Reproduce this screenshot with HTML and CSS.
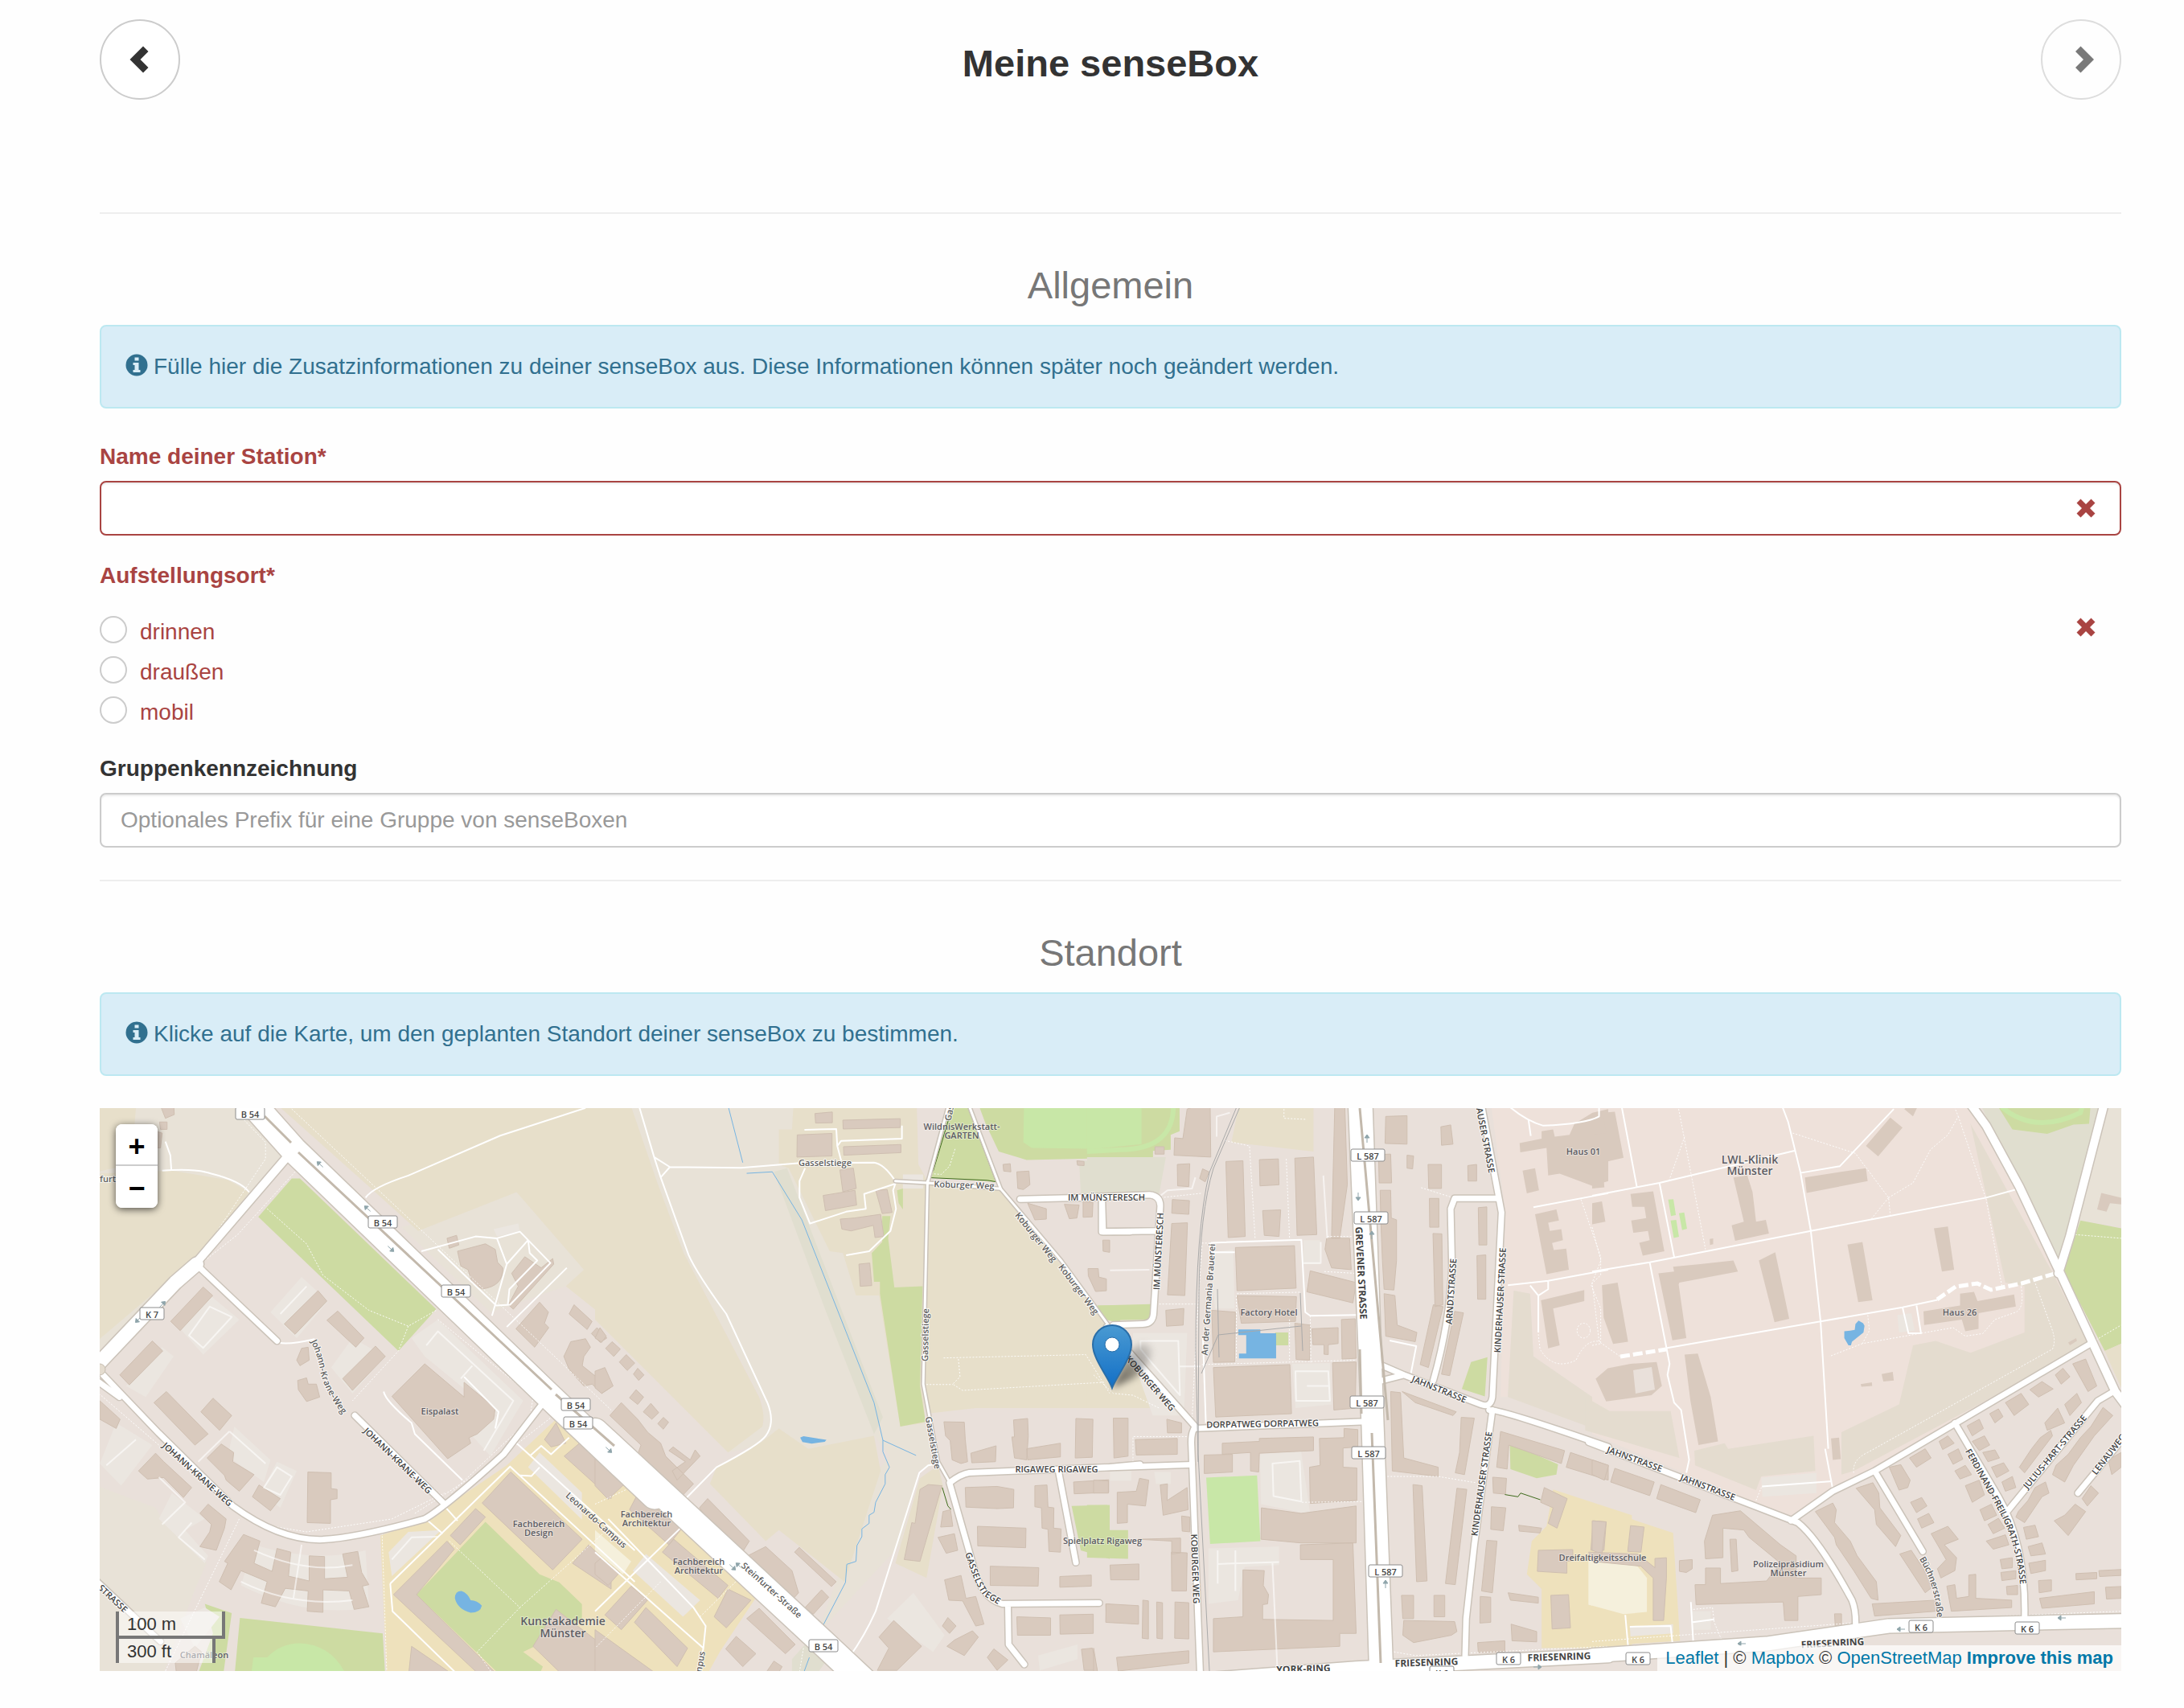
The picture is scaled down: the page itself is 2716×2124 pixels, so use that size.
FILE: index.html
```html
<!DOCTYPE html>
<html lang="de">
<head>
<meta charset="utf-8">
<meta name="viewport" content="width=device-width, initial-scale=1">
<title>Meine senseBox</title>
<link rel="stylesheet" href="styles.css">
</head>
<body>
<main class="page">
  <header class="wizard-head">
    <button class="round-btn" type="button" aria-label="Zurück">
      <svg width="26" height="34" viewBox="0 0 26 34" aria-hidden="true"><path d="M17 0.500 23.500 7 13.500 17 23.500 27 17 33.500 0.500 17z"/></svg>
    </button>
    <h1 class="wizard-title">Meine senseBox</h1>
    <button class="round-btn" type="button" aria-label="Weiter" disabled>
      <svg width="34" height="34" viewBox="-10 0 34 34" aria-hidden="true"><path d="M6.500 0.500 0 7 10 17 0 27 6.500 33.500 23 17z"/></svg>
    </button>
  </header>

  <form class="station-form">
    <section class="block">
      <h2 class="block-title">Allgemein</h2>
      <p class="alert">
        <svg class="info" width="28" height="28" viewBox="0 0 28 28" aria-hidden="true"><circle cx="14" cy="14" r="13.500"/><path class="info-i" d="M11.500 4.500h5v4h-5zM9.500 11h7v9h2v3h-9v-3h2v-6h-2z"/></svg>
        <span>Fülle hier die Zusatzinformationen zu deiner senseBox aus. Diese Informationen können später noch geändert werden.</span>
      </p>
      <div class="field has-error">
        <label class="field-label" for="name">Name deiner Station*</label>
        <div class="control">
          <input class="text-input" id="name" type="text">
          <svg class="feedback" width="24" height="24" viewBox="0 0 24 24" aria-hidden="true"><path d="M5.500 0.500 12 7 18.500 0.500 23.500 5.500 17 12 23.500 18.500 18.500 23.500 12 17 5.500 23.500 0.500 18.500 7 12 0.500 5.500z"/></svg>
        </div>
      </div>
      <fieldset class="field has-error">
        <legend class="field-label">Aufstellungsort*</legend>
        <div class="control radios">
          <label class="radio"><input type="radio" name="exposure" value="indoor"><span>drinnen</span></label>
          <label class="radio"><input type="radio" name="exposure" value="outdoor"><span>draußen</span></label>
          <label class="radio"><input type="radio" name="exposure" value="mobile"><span>mobil</span></label>
          <svg class="feedback" width="24" height="24" viewBox="0 0 24 24" aria-hidden="true"><path d="M5.500 0.500 12 7 18.500 0.500 23.500 5.500 17 12 23.500 18.500 18.500 23.500 12 17 5.500 23.500 0.500 18.500 7 12 0.500 5.500z"/></svg>
        </div>
      </fieldset>
      <div class="field">
        <label class="field-label" for="group">Gruppenkennzeichnung</label>
        <div class="control">
          <input class="text-input" id="group" type="text" placeholder="Optionales Prefix für eine Gruppe von senseBoxen">
        </div>
      </div>
    </section>

    <section class="block">
      <h2 class="block-title">Standort</h2>
      <p class="alert">
        <svg class="info" width="28" height="28" viewBox="0 0 28 28" aria-hidden="true"><circle cx="14" cy="14" r="13.500"/><path class="info-i" d="M11.500 4.500h5v4h-5zM9.500 11h7v9h2v3h-9v-3h2v-6h-2z"/></svg>
        <span>Klicke auf die Karte, um den geplanten Standort deiner senseBox zu bestimmen.</span>
      </p>

      <div class="map">
        <svg class="tiles" viewBox="0 0 2514 700" preserveAspectRatio="xMidYMid slice" role="img" aria-label="Karte von Münster">
          <defs>
            <g id="roads">
              <g transform="matrix(.40816 0 0 .45918 -4 -8)">
                <path class="w-xl" d="M440 -30 600 130 1370 790 1700 1068"/>
                <path class="w-l" d="M590 140 310 430"/>
                <path class="w-h" d="M305 440 240 490 0 715"/>
                <path class="w-m" d="M20 740 90 805 190 898 415 1095Q560 1190 690 1186 800 1180 1000 1130 1060 1100 1240 955L1370 805M0 755 70 800"/>
                <path class="w-m" d="M787 850 1055 1085M315 450 550 648M-10 1290 195 1462"/>
              </g>
              <g transform="matrix(.40816 0 0 .45918 616 -8)">
                <path class="w-xl" d="M0 893 270 1115 700 1470 820 1570"/>
                <path class="w-m" d="M1660 982 1568 990 1140 1005Q1115 1008 1080 1032L1150 1250Q1175 1345 1240 1360L1536 1358M1258 1362 1260 1470 1308 1524M1412 1000 1465 1248M1295 264 1568 258M1545 262 1548 352 1630 352"/>
                <path class="w-s" d="M1236 236 1420 430 1568 610"/>
                <path class="w-s" d="M1013 215 1000 765 1045 975 1080 1030M1013 220 1080 0M1236 236 1135 0M915 215 1013 220 1236 236"/>
              </g>
              <g transform="matrix(.40816 0 0 .45918 1236 -8)">
                <path class="w-h" d="M797 0 838 880 862 1560M828 0 862 860 892 1560"/>
                <path class="w-h" d="M200 1575 800 1535 1568 1500"/>
                <path class="w-m" d="M0 992 300 983M310 885 860 865M0 258 170 252Q205 255 203 285L183 570Q182 602 150 602L60 605 M25 262 25 352 190 350"/>
                <path class="w-m" d="M40 610 310 880Q296 895 298 930L325 1560"/>
                <path class="w-m" d="M1180 0 1243 300 1215 800Q1210 830 1180 820L945 740 880 715M945 740 880 755M1235 262 1100 262 1088 290 1092 450Q1085 600 1035 755M1215 835 1160 1200 1135 1400 1132 1500M1205 835Q1230 830 1568 935"/>
              </g>
              <g transform="matrix(.43367 0 0 .45918 1856 -8)">
                <path class="w-h" d="M0 1500 500 1468 850 1420 1568 1405"/>
                <path class="w-m" d="M-10 922 590 1140Q650 1185 745 1350 758 1380 755 1430M570 1135 690 1055 810 1000 1430 655M810 1000 948 1218M1040 870 1165 1070Q1245 1200 1240 1400M1190 1110 1450 810 1495 785M1393 1060 1568 860"/>
                <path class="w-l" d="M1080 0 1130 65 1225 230 1340 460 1500 785 1560 860M1470 0 1370 365 1337 465"/>
              </g>
            </g>
            <path id="p-jk" d="M267 288Q276 305 280 330 286 352 306 378"/>
            <path id="p-ga" d="M1081 552Q1092 588 1102 602L1126 617"/>
            <path id="p-ff" d="M2324 424Q2350 470 2368 502 2390 545 2394 602"/>
            <path id="p-bu" d="M2267 558Q2287 590 2290 632"/>
            <path id="arrow" d="M-5 0H4M1 -3 5 0 1 3z"/>
            <linearGradient id="pin" x1="0" y1="0" x2="0" y2="1"><stop offset="0" stop-color="#4a9ad2"/><stop offset="1" stop-color="#126fc6"/></linearGradient>
            <linearGradient id="shade" x1="0" y1="1" x2="1" y2="0"><stop offset="0" stop-color="#000" stop-opacity=".6"/><stop offset="1" stop-color="#000" stop-opacity=".1"/></linearGradient>
            <filter id="soft" x="-50%" y="-50%" width="200%" height="200%"><feGaussianBlur stdDeviation="4"/></filter>
          </defs>

          <rect class="residential" width="2514" height="700"/>

          <!-- land use -->
          <g transform="matrix(.40816 0 0 .45918 -4 -8)">
            <path class="meadow" d="M0 0H500L590 140 310 430 0 680z"/>
            <path class="farm" d="M0 0H122L105 170 0 190zM0 195 230 187 400 212 465 245 310 430 225 480 0 650z"/>
            <path class="meadow" d="M930 340 1280 245 1485 455 1430 500 1200 570z"/>
            <path class="farm" d="M540 0H1600V620L1430 500 1485 455 1280 245 980 350 830 230z"/>
            <path class="green" d="M595 208H620L1035 562 920 675 493 312z"/>
            <path class="meadow" d="M0 1040 180 1100 200 1130 335 1250 300 1320 200 1560H0z"/>
            <path class="green" d="M330 1360 412 1385 385 1560H305L355 1440zM437 1398 872 1440 880 1560H420z"/>
            <path class="pitch" d="M470 1560 478 1505 520 1505Q560 1468 618 1467 720 1470 765 1560z"/>
            <path class="school" d="M865 1175 1010 1130 1250 985 1400 860 1620 1000V1570H885z"/>
            <path class="green" d="M1185 1138 1350 1280 1410 1302 1502 1380 1440 1430 1300 1490 1360 1530 1340 1570H1250L975 1335z"/>
            <path class="water" d="M1092 1345Q1092 1325 1112 1325 1130 1330 1140 1350 1160 1350 1174 1365 1170 1384 1140 1384 1100 1375 1092 1345z"/>
            <path class="yard" d="M625 475 705 540 610 640 530 570zM340 520 435 590 325 685 250 610zM780 640 880 690 780 790 715 720zM200 665 235 690 150 800 90 770zM1040 590 1300 810 1200 960 1140 900 1220 850 1000 690 960 640zM60 870 170 930 75 1040 10 980zM420 880 530 970 510 1030 400 960zM550 975 610 1000 560 1100 500 1060zM230 1060 330 1130 270 1160 340 1230 330 1250 190 1130zM890 1220 950 1165 1050 1160 900 1285zM1350 950 1540 1110 1500 1150 1315 990zM480 1200Q660 1250 820 1215L830 1370Q640 1400 440 1310zM1210 345 1285 330 1290 352 1220 365zM255 1400 330 1370 375 1395 300 1480z"/>
          </g>
          <g transform="matrix(.40816 0 0 .45918 616 -8)">
            <path class="meadow" d="M105 0H605L600 75 560 75V170L590 180 715 405 755 410 795 525H865L930 880 1005 870 1050 980 985 1000 930 1200 700 1420 640 1570 660 1480 860 1000 900 960 850 905 650 940 560 885 505 930 405 950 515 870 510 810 270 410 190 220z"/>
            <path class="farm" d="M0 0H105L190 220 270 410 500 800Q520 850 510 880L405 950 0 590zM605 0H980L985 170 1013 215 1000 765 1005 870 930 880 865 525H795L755 410 715 405 590 180 560 170V75L600 75zM1013 225 1236 240 1600 640V830H1160L1010 845 1000 765zM560 885 650 940 850 905 870 1000 760 1300 560 1160 520 1190 350 1035 370 990 510 920zM990 1020 1045 985 1060 1040 1010 1290 915 1250z"/>
            <path class="scrub" d="M545 190 585 180 877 855 850 900 700 560zM1475 160H1700V250H1480zM600 1510 640 1470 700 1520 660 1570H600z"/>
            <path class="green" d="M1085 0H1137L1222 217 1022 205zM1165 0H1700V150L1315 158 1230 135 1190 60zM843 410 875 380V310H900L893 370 912 503 998 500 990 770 1007 867 930 880 868 520V488H850zM920 240 938 235V292L925 275zM1452 1095 1568 1092V1238L1480 1215zM1530 552H1600V600L1555 590z"/>
            <path class="pitch" d="M1307 0H1700V130L1330 125 1305 110z"/>
            <path class="school" d="M0 930 280 1160 500 1330 380 1490 330 1570H-40V940z"/>
            <path class="yard" d="M155 1225 320 1350 268 1395 115 1270zM970 1330 1065 1445 1030 1490 890 1400zM938 197H1000V235H938zM1350 1500 1470 1470V1510L1355 1540z"/>
            <path class="green" d="M0 1490 55 1530 30 1570H0z"/>
            <path class="water" d="M625 910 635 906 705 916 700 921 660 926 632 922z"/>
            <path class="sand" d="M0 1160 110 1245 85 1280 0 1215z"/>
          </g>
          <g transform="matrix(.40816 0 0 .45918 1236 -8)">
            <path class="farm" d="M445 0H670V135L420 110zM-20 560 60 610 200 800 190 830H-20z"/>
            <path class="scrub" d="M-20 150H220L200 248H-20z"/>
            <path class="hospital" d="M1210 0H1640V900L1568 900V830L1340 690 1330 520 1280 512 1262 800 1240 800 1255 300z"/>
            <path class="heath" d="M1280 512 1330 520 1340 690 1568 830V900L1262 800z"/>
            <path class="green" d="M-20 0H262V80L235 90V130L-20 145zM12 552 175 548 170 590 60 592zM1150 705 1200 692 1192 798 1122 778zM-20 1092H42V1160H105V1238L-20 1235zM1268 925 1415 982 1410 1010 1350 1020 1270 995zM553 625H593V660H553z"/>
            <path class="pitch" d="M-20 0H146V115L-20 130zM343 1018 498 1012 508 1190 355 1198z"/>
            <path class="pitch-line" d="M-20 135 80 130Q250 130 243 0"/>
            <path class="school" d="M1400 1050 1640 1120V1480H1365V1320L1320 1280 1335 1190 1380 1150z"/>
            <path class="sand" d="M1508 1240H1640V1390L1508 1362z"/>
            <path class="water" d="M441 617H508V627H556V695H443V682H465V632H441z"/>
            <path class="yard" d="M120 626H285L275 850H180L120 700zM350 410 425 400 430 560 370 560zM507 955 632 945 660 1118 510 1090zM350 1210 565 1205V1255L460 1260 440 1350 350 1360zM605 710 720 708 725 820 615 830zM640 375 690 375V440H640zM50 1000H115V1027H50zM185 1003H235V1035H190z"/>
          </g>
          <g transform="matrix(.43367 0 0 .45918 1856 -8)">
            <path class="hospital" d="M0 0H1085L1225 240 1340 460 1430 655 810 1000 570 1130 250 1000 0 900z"/>
            <path class="heath" d="M1085 60 1330 480 1420 655 1090 830 750 1000 715 1010V895L880 820 920 660 985 648 1085 680 1240 625V500L1185 490zM-20 800 50 838H225L250 965-20 890zM293 945 380 925 390 940 635 905 640 1000 485 1015 470 1052 295 985z"/>
            <path class="scrub" d="M1110 0H1470L1390 300 1335 430 1225 230z"/>
            <path class="meadow" d="M1475 0H1530V340L1400 322 1380 350z"/>
            <path class="green" d="M1155 0H1430L1425 60 1380 62 1305 87 1205 75zM1400 322 1530 345V650L1470 675 1352 460z"/>
            <path class="farm" d="M1470 675 1530 650V800L1500 740z"/>
            <path class="school" d="M0 1095 232 1168 252 1460 0 1475z"/>
            <path class="sand" d="M-10 1240 130 1258 157 1290V1382L90 1388-10 1362z"/>
            <path class="pitch" d="M218 265 233 264 240 307 226 310zM249 302 264 300 272 344 258 348zM225 322 241 320 249 366 234 369z"/>
            <path class="pitch-line" d="M1175 15Q1270 90 1400 30L1410 0"/>
            <path class="yard" d="M485 1018 643 1005V1060L488 1070zM875 578 915 573 925 620 880 625zM108 1422 232 1415V1440L110 1448zM285 1380H340V1430H285z"/>
            <path class="water" d="M764 593 777 600 781 607 778 625 745 650 742 660H735L723 640V622L740 620 753 618 755 602z"/>
          </g>

          <!-- buildings -->
          <g class="buildings" transform="matrix(.40816 0 0 .45918 -4 -8)">
            <path d="M190 0H235L237 35 210 45zM192 55H215V75H195zM180 80 200 85 195 125H180zM325 502 354 525 255 620 226 595zM170 648 202 675 100 767 71 740zM675 512 702 540 605 630 572 602zM735 567 815 640 790 665 702 592zM850 662 880 690 780 782 750 750zM213 785 340 900 300 930 175 815zM355 803 412 850 375 890 318 840zM625 668 645 665 648 700 620 715 610 700zM613 755 640 748 645 765 670 765 680 800 640 812 615 780zM180 952 205 975 290 1045 265 1072 205 1018 155 1022 128 1000zM380 927 418 950 415 975 480 1010 435 1055 395 1025 390 1012 337 965zM495 1038 560 1075 530 1108 475 1070zM644 1003 715 1005V1048L733 1050V1075L713 1078V1142L642 1140zM1000 710 1120 800V760L1215 830 1210 860 1160 900 1135 910 1140 925 1070 967 900 798zM1100 405 1185 385 1215 400 1222 435 1238 450Q1240 500 1175 507L1145 492 1132 455 1110 445zM1068 370 1097 362 1104 388 1075 397zM1305 420 1355 450 1390 425 1393 440 1270 562 1255 550 1285 500 1265 465zM1350 543 1377 570 1365 600 1378 612 1335 665 1278 615zM1455 550 1510 595 1495 617 1440 575zM1525 612 1555 640 1535 652 1508 628zM1445 650 1490 642 1505 665 1485 690 1480 715 1565 775 1540 790 1510 765 1485 770 1440 725 1424 690zM1262 1003 1480 1185 1390 1268 1175 1087zM1155 1102 1185 1125 1108 1200 1078 1175zM1068 1190 1090 1212 975 1335 1225 1555H1170L905 1335zM1430 925 1400 870 1365 915 1385 935zM1485 915 1568 985V1075L1425 960zM1500 1200 1568 1260V1320L1450 1250zM340 1090 395 1130 390 1155 365 1215 315 1205 345 1165 350 1145 315 1115zM448 1172 498 1190 480 1250 535 1272 550 1210 592 1220 585 1285 648 1298V1230L695 1232V1292L765 1288 750 1225 796 1218 808 1275 830 1308 810 1312 830 1368 785 1375 770 1325 690 1322V1383L642 1380 645 1325 575 1318 545 1368 502 1358 520 1300 440 1270 410 1322 374 1300 400 1250 390 1245zM10 810 72 860 60 885 10 860zM240 1520 300 1475 320 1490 300 1560H245zM960 1475 1100 1560H950zM1400 1375 1568 1490V1570H1440L1330 1475z"/>
          </g>
          <g class="buildings" transform="matrix(.40816 0 0 .45918 616 -8)">
            <path d="M670 32 723 28V57L672 58zM616 90 722 86V147L615 150zM755 50 930 46V70L756 74zM757 122 932 116V138L758 145zM746 185 787 180 796 235 755 244zM695 254 792 240 797 280 702 295zM855 240 890 238 905 300 875 303zM747 318 790 315 870 305 880 365 853 368 848 335 780 350 752 345zM804 440 837 437 843 498 808 500zM15 612 34 635 20 652 0 640zM52 650 77 670 57 690 32 668zM95 685 121 708 98 728 74 705zM130 722 149 740 133 755 117 738zM125 780 148 800 130 820 105 802zM170 817 194 842 173 860 147 840zM208 855 224 868 208 887 191 872zM80 815 130 860 160 895 200 925 215 960 300 1035 265 1068 130 955 140 930 45 850zM238 935 290 970 305 943 320 960 250 1025 235 1000 275 975 225 945zM30 720 55 770 20 790 0 775V730zM343 1075 470 1190 435 1240 318 1100zM520 1205 600 1270 620 1330 600 1350 465 1230zM622 1207 735 1300 720 1313 608 1220zM690 1322 712 1342 665 1388 640 1370zM1275 862 1318 858 1320 905 1315 970 1278 965 1270 908H1278zM1315 940 1418 925V962L1318 970zM1063 867 1125 868 1128 915 1135 975 1115 980 1088 970 1082 918 1068 905zM1145 952 1222 932 1220 975 1148 978zM1465 858 1517 860 1515 963 1463 965zM1015 1037 1057 1040 990 1245 942 1240 965 1140 975 1142 990 1050zM1128 1045 1225 1042 1276 1050 1275 1100 1225 1102 1130 1098zM1165 1150 1313 1155 1312 1208 1166 1203zM1340 1040 1377 1038 1380 1098 1398 1100 1397 1155 1420 1157 1418 1220 1383 1218 1380 1158 1362 1155 1360 1100 1340 1097zM1458 1030 1565 1024V1058L1460 1062zM1204 1258 1352 1262 1350 1312 1204 1310zM1416 1286 1512 1282V1312L1416 1315zM1060 1110 1083 1105 1090 1150 1053 1152zM1045 1180 1095 1170 1105 1215 1070 1223zM1065 1295 1115 1283 1130 1345 1160 1340 1185 1415 1160 1420 1120 1352 1078 1350zM1285 1395 1388 1398V1445H1287zM1416 1390 1518 1388V1440L1417 1442zM1075 1397 1100 1420 1080 1440 1058 1420zM1095 1458 1150 1433 1168 1450 1125 1500 1072 1475zM910 1405 995 1475 920 1540H860L895 1480 865 1450zM1215 1482 1258 1512 1225 1540 1195 1505zM500 1372 610 1470 580 1495 462 1400zM430 1448 490 1495 450 1530 398 1482zM545 1515 570 1530 550 1560H510zM130 1062 200 1110 265 1155 225 1200 105 1105zM240 1185 405 1310 375 1345 205 1220zM405 1320 475 1350 400 1425 363 1395zM0 955 90 1035 40 1077 0 1040zM20 1235 75 1275 40 1310 0 1280V1250zM110 1312 160 1350 80 1430 30 1390zM155 1370 282 1480 250 1530 120 1410zM0 1430 180 1545V1570H0zM1243 170 1265 168 1267 190 1245 188zM1285 190 1322 188 1325 225 1305 238 1288 235zM1318 275 1375 290V318L1340 320zM1430 278 1475 280 1468 315 1445 317zM1487 270 1517 273 1515 312 1487 313zM1502 452H1533L1535 475 1558 480V512L1525 514 1503 472zM1547 375H1568V408L1548 405zM1468 160 1490 162V173L1470 172zM1556 1360H1568V1410L1558 1405zM1482 1483 1515 1480 1530 1540H1490z"/>
          </g>
          <g class="buildings" transform="matrix(.40816 0 0 .45918 1236 -8)">
            <path d="M285 20 355 0 357 150 245 145 247 98 272 100zM187 122H215V142H187zM255 170 293 168 290 230 256 228zM332 182 352 190 340 217 323 208zM403 162 455 160 462 365 410 368zM505 157 563 155 565 225 507 228zM613 153 670 150 680 360 620 362zM515 295 570 293 565 365 520 362zM240 265 292 268 290 305 238 302zM238 330 286 328 278 525 225 523zM735 0H765L773 225 750 370H725zM710 370H780L785 455 725 450 705 400zM432 395 612 390 617 505 437 512zM660 458 800 490 790 545 650 515zM437 525 618 528 615 595 450 600zM360 565 432 570 430 705 365 706zM613 600 660 605 658 700 617 698zM665 615 745 612V655L715 658V685L702 684V658H668zM755 590 797 588 800 695 757 697zM220 565 275 560 273 605 222 608zM365 720 598 712 603 845 372 854zM728 707 800 705 797 830 732 835zM392 925 505 920V912L670 908V945L505 952 503 1003 478 1000V950L392 955zM337 957 423 955V1003L337 1007zM688 912 763 910V885L805 888V935L760 938V990L802 992V1080L660 1088 658 990 690 985zM511 1100 632 1115 800 1095V1195H632L510 1185zM630 1200 790 1195 800 1440 750 1440 750 1475 365 1490V1400L455 1395V1268L520 1270 517 1310 533 1335 530 1360 515 1362V1402L730 1405V1240L630 1240zM60 857H105V960L62 965zM223 860 268 870V897H225zM127 915 255 912V955L130 957zM0 1025 45 1027V1060H0zM72 1058 130 1055 140 1020 168 1025 158 1095 103 1090V1140L72 1142zM203 1038 225 1035 224 1080 285 1045 288 1105 212 1120zM268 1122 293 1125V1165L270 1163zM135 1185 265 1182V1222L238 1225V1190zM237 1220 285 1222 283 1325H238zM50 1255 138 1252V1295H52zM38 1360 137 1365V1415L37 1410zM150 1350 167 1352V1455L148 1453zM192 1355 210 1357V1455L193 1453zM248 1355 290 1357V1455L247 1453zM70 1505 290 1487V1520L75 1542zM0 1480 15 1560H0zM890 40 955 38V115L888 113zM1058 68 1088 63 1095 115 1060 118zM1019 170H1060V235H1021zM1140 173 1167 170V215H1141zM868 143 905 142 908 220H870zM873 240H905L907 315 923 320V430L915 510 885 508 880 430 875 320zM885 520 918 525 925 605 985 625 980 650 890 635zM1023 262H1052V340H1024zM1172 287 1198 285V388H1174zM1168 417 1195 415V535H1170zM1034 357 1061 358 1064 550 1040 555zM1035 550 1065 555 1020 720 995 712zM1100 568 1127 572 1085 742 1060 738zM955 145 975 147 972 182 955 180zM905 785 935 788 945 965 1050 990V1015L910 1000zM940 785 1105 840 1095 850 980 815zM1120 855 1160 857 1130 1010 1102 1005 1115 950zM973 1037 1001 1040 1016 1298 984 1300zM1107 1047 1137 1050 1102 1308 1072 1305zM1240 893 1435 945 1425 980 1265 930 1260 995 1228 990zM1453 950 1568 985V1025L1440 990zM1216 1017 1258 1020 1255 1063 1218 1060zM1212 1097 1256 1100 1248 1162 1210 1158zM1198 1188 1229 1190 1215 1330 1182 1325zM1178 1340 1210 1342V1410L1177 1412zM938 1337H975V1400H942zM1037 1337H1070V1395H1037zM945 1405 1100 1408 1107 1435 1090 1445 975 1465 942 1445zM1170 1465 1253 1460V1490L1172 1492zM1272 1415 1350 1435V1463L1275 1460zM1263 1330 1355 1342V1358L1270 1350zM1295 1147 1365 1155 1360 1168 1297 1163zM1373 1045 1443 1075 1412 1155 1385 1142 1400 1100 1362 1085zM1522 1135 1562 1138 1555 1215H1515zM1355 1215 1460 1213V1242L1442 1245V1277L1352 1272zM1393 1337 1447 1335 1453 1425 1397 1428z"/>
          </g>
          <g class="buildings plain" transform="matrix(.40816 0 0 .45918 1236 -8)">
            <path d="M1298 112 1365 100V80L1400 75 1405 95 1450 90 1465 60 1520 30 1568 20V215L1520 228 1420 195 1385 200 1380 125 1300 137zM1307 187 1345 180 1357 240 1320 248zM1345 305 1410 292 1418 322 1385 328 1390 350 1425 345 1430 375 1397 383 1402 402 1440 398 1448 455 1380 467zM1363 538 1495 510V540L1400 560 1420 660 1385 668z"/>
          </g>
          <g class="buildings plain" transform="matrix(.43367 0 0 .45918 1856 -8)">
            <path d="M30 30 65 27 90 152 30 165 35 232 0 235V90L40 85zM110 250 175 243 207 405 145 417 135 382 165 375 160 350 118 355 112 322 155 315 150 285 115 285zM0 275 28 270 38 325 0 332zM405 205 445 200 460 245 470 325 498 320 507 357 410 377 400 335 435 325zM785 120 855 43 890 70 820 148zM895 20 920 0H940L920 40zM610 205 785 180 790 215 615 247zM190 465 235 460 232 447 310 440 405 430 418 460 250 490 248 495 270 640 230 646zM478 430 525 408 565 588 523 597zM732 387 775 380 804 538 763 543zM980 343 1020 338 1038 455 1003 460zM28 497 73 490 103 650 60 656 33 585zM950 568 1055 552V520L1095 515 1105 540 1210 522 1215 555 1108 573V615L1070 622 1060 590 952 605zM265 685 303 682 340 800 361 920 305 930 282 812zM10 750 45 722 110 710 185 705 200 770 170 795 40 812zM830 738 862 732 865 755 835 758zM770 765 802 760 803 770 772 772zM337 372 347 370V386L338 388zM685 912 708 910 713 968 690 970zM1460 247 1517 260V278L1485 275 1475 298 1448 292zM1365 652 1388 640 1390 648 1370 660z"/>
          </g>
          <path class="hole" d="M1907 326 1930 322 1934 350 1910 355z"/>
          <g class="buildings" transform="matrix(.43367 0 0 .45918 1856 -8)">
            <path d="M65 993 178 1030 165 1067 53 1030zM197 1037 310 1078 297 1113 185 1075zM0 970 47 985 35 1025 0 1010zM345 1120 425 1108 540 1200 585 1230V1290H657V1335L590 1340V1405H552L548 1355 298 1362 295 1308H325V1263H368V1305L500 1298 540 1250 450 1180 435 1160 375 1155V1235L325 1238 322 1190zM395 1185H413L418 1270 400 1273zM0 1135 40 1138 28 1225 0 1215zM110 1148 149 1152 140 1220 102 1218zM-10 1220 130 1225 180 1262V1237L213 1235V1290L205 1405 175 1405V1290L140 1258 0 1245zM250 1243 287 1240V1265L270 1275 250 1272zM695 1387H715V1420H697zM803 1360 985 1350V1380L810 1393zM757 1047 805 1032 822 1060 825 1100 885 1175 870 1205 815 1145 810 1105zM640 1110 690 1087 700 1105 695 1140 740 1190 760 1230 815 1300 820 1350 800 1345 750 1270 700 1200 695 1180zM852 990 885 983 912 1025 905 1045 880 1052zM910 965 955 940 972 965 930 990zM995 920 1020 905 1038 925 1005 942zM1075 878 1110 860 1122 885 1090 905zM1140 845 1165 832 1178 853 1155 870zM1185 815 1230 790 1252 820 1210 850zM1255 780 1290 758 1322 778 1280 800zM1328 740 1350 722 1370 745 1345 765zM1378 710 1415 697 1447 770 1422 785zM1090 920 1125 905 1140 930 1110 945zM1020 955 1050 940 1063 968 1035 982zM1040 1000 1070 985 1088 1010 1055 1022zM1120 950 1155 943 1168 965 1135 975zM1145 990 1180 978 1195 1000 1160 1018zM1175 1030 1205 1015 1215 1045 1185 1055zM1070 1040 1110 1025 1125 1065 1090 1085zM1112 1105 1145 1090 1160 1120 1125 1135zM1135 1145 1165 1128 1183 1155 1150 1170zM1130 1190 1185 1173 1195 1200 1150 1212zM1170 1240 1205 1235V1262L1175 1265zM1172 1275 1215 1270V1292L1175 1297zM1188 1313 1220 1310V1335H1190zM1237 1153 1270 1147 1280 1178 1245 1185zM1250 1205 1290 1195 1300 1225 1258 1230zM1252 1250 1300 1242V1270L1258 1278zM1280 1297 1317 1295V1325L1282 1330zM1283 1345 1440 1327V1360L1290 1372zM1387 1278 1447 1275V1292L1388 1295zM1453 1270 1517 1267V1283L1455 1286zM1472 1315 1517 1313V1345L1475 1347zM1355 820 1390 790 1403 815 1370 850zM1335 830 1355 870 1305 890 1298 870zM1225 990 1260 940 1285 910 1315 890 1320 905 1240 1005zM1222 1110 1250 1080 1270 1045 1300 1030 1310 1060 1290 1070 1240 1140 1215 1125zM1330 985 1365 955 1400 910 1430 880 1465 828 1493 850 1440 905 1380 985 1355 1030 1320 1010zM1405 1075 1430 1040 1452 1060 1420 1095zM1325 1135 1355 1120 1385 1090 1415 1110 1365 1175zM1480 970 1517 950V990L1490 1010zM913 1085 945 1072 960 1095 930 1113zM933 1130 965 1115 980 1140 945 1155zM972 1170 1020 1150 1050 1185 1010 1200 1045 1235 1040 1270 1000 1290 990 1265 1015 1240zM882 1225 915 1215 950 1265 975 1315 955 1330zM1017 1312 1040 1308 1045 1345 1080 1340V1282L1100 1280V1345L1203 1350V1370L1030 1380z"/>
          </g>

          <!-- streams, hedges, railway -->
          <g class="stream" transform="matrix(.40816 0 0 .45918 616 -8)"><path d="M407 17 450 165M462 194 540 190 630 320 850 815 877 917V948L897 990 884 1010V1035L855 1085 850 1112 835 1120V1142L813 1157V1178L798 1202 795 1245 767 1253 763 1302 692 1423M877 917 978 958M653 1505 630 1560"/></g>
          <g class="hedge" transform="matrix(.40816 0 0 .45918 616 -8)"><path d="M1080 40 1030 188M1022 206 1195 213 1222 217 1137 17M1058 1045 1075 1095 1084 1104"/><path d="M2772 1064 2812 1070 2820 1060 2880 1078"/></g>

          <!-- small paths -->
          <g class="track" transform="matrix(.40816 0 0 .45918 -4 -8)"><path d="M555 652Q580 660 665 643M200 187Q300 180 350 195 440 215 465 245M228 185 225 145 210 108M820 260Q840 232 950 200L1230 92 1490 17M990 405 1155 365 1220 370 1290 352 1383 437 1260 550 1218 552 1040 400M1220 370 1250 440 1205 580M1250 440 1315 375 1320 410 1343 430 1258 508 1253 552M1433 450 1250 610M875 785Q880 810 960 870L970 900 1115 1025M1120 745 1225 840 1215 885M895 1305 1260 988 1640 1300M895 1305 902 1380 1110 1560M1280 925 1640 1215M1320 960 1355 932 1385 955 1440 910M1290 1012 1325 1014 1350 990M1060 1095 1100 1135M1010 1135 1055 1170"/></g>
          <g class="track" transform="matrix(.40816 0 0 .45918 616 -8)"><path d="M130 0 180 150 200 205 285 415Q310 465 400 575L525 815Q550 870 520 905 500 930 370 990L265 1085M180 150 228 177 445 179 625 166 850 165Q880 168 915 215M200 205 228 177M638 76 735 74 738 120 750 160M738 120 750 106 935 100V65M640 180 623 215V260L655 330 765 298 825 290 820 250 915 222 908 240 917 290 900 350 835 405 765 416M0 1380 260 1155M0 1220 330 1480 315 1550M40 1130 300 1370 337 1420 330 1480M1045 980 1015 985 988 1005 855 1380Q820 1450 770 1510"/></g>
          <g class="track" transform="matrix(.40816 0 0 .45918 1236 -8)"><path d="M430 408H355V385L360 382 633 374 645 570 660 580 835 577M902 647 983 662 967 735M333 640 342 870M1250 0Q1310 50 1370 65 1500 60 1540 40V10M1325 50 1332 93M1340 286 1568 248M1262 497 1385 485 1568 455M1330 498 1355 525 1385 508V487M1355 525V625"/></g>
          <g class="track faint" transform="matrix(.40816 0 0 .45918 1236 -8)"><path d="M143 648H258L263 795 180 710 143 670zM258 717H325M545 980 628 973 633 1083 548 1068zM615 730H715L720 810H617zM650 770H718M378 1215V1305M432 1215V1325M378 1252 565 1247M545 1250 560 1540M692 380V437H640M50 457 170 455M700 200 712 370M310 205 300 235 225 240 203 255M375 95V40L415 30"/></g>
          <g class="track faint" transform="matrix(.40816 0 0 .45918 -4 -8)"><path d="M640 500 560 575M345 555 412 583 325 667 282 633zM1005 660 1040 622 1270 810 1180 945M1145 715 1110 750M405 893 515 980M310 975 405 893M550 990 595 1015 560 1065 510 1045zM120 915 30 985M190 1017 270 1085 200 1145M290 1140 250 1180 330 1240M480 1215Q640 1280 780 1255M440 1300Q600 1370 780 1350M625 1200 600 1345M900 1240 960 1180 1040 1178"/></g>
          <g class="track" transform="matrix(.43367 0 0 .45918 1856 -8)"><path d="M82 0 128 230M0 255 193 220 580 133M193 220 235 420M540 0 562 55 597 190 627 350 655 595 677 940M597 193 710 175 865 20M0 460 165 435 627 350 1130 260 1215 238M165 435 222 710 216 740 235 815 255 835 278 970 270 1005M215 667 655 595 890 557 990 537M890 557 907 627H943L930 552M668 940 690 1050M487 1042 688 1028M283 1355 290 1465M285 1410 350 1402M108 1422 225 1420 230 1465M95 1390 103 1475"/></g>
          <g class="dots" transform="matrix(.40816 0 0 .45918 -4 -8)"><path d="M595 20 1010 365 1568 835M450 50 515 110V155L315 420M605 190 430 360 330 430M520 290 640 385 690 470 830 565 950 608 1035 565M950 608 920 675 780 810M0 785 400 1090 500 1145 640 1165 900 1130 1060 1060M640 1190 870 1165 885 1560M435 1130 200 1560M1075 1190 1290 1370 1568 1150M1290 1370 1160 1490 1215 1560M1040 590 1330 800 1320 860 1080 1060M800 855 1050 1065M970 1115 1190 990 1400 845"/></g>
          <g class="dots" transform="matrix(.40816 0 0 .45918 616 -8)"><path d="M1062 694 1495 685 1568 790M1107 697 1112 745 1090 765 1120 782 1550 760M1000 766H1090M1097 128 1080 175 1055 197 1025 195M320 1395 440 1290M0 1090 120 1040M200 1300 0 1480M635 1480 620 1560"/></g>
          <g class="dots" transform="matrix(.40816 0 0 .45918 1236 -8)"><path d="M0 740 60 790 120 795 200 830M330 390 312 640 300 860M120 975V907H300M205 260 330 248M400 105 475 120 492 370M587 155 597 370M330 712 800 700M435 525V700M330 383H360M437 520 630 516M597 590V700M703 460 800 465M712 365H790M998 233 1095 260M895 1015H1050L1165 1032M635 1085 820 1083M915 1490 980 1500 1568 1475M1485 265 1545 420V470L1515 495 1545 560V650Q1500 640 1470 700 1400 730 1360 670L1355 630M660 580 662 710M190 548H310M580 20V45L650 48"/><circle cx="1493" cy="620" r="20"/></g>
          <g class="dots" transform="matrix(.43367 0 0 .45918 1856 -8)"><path d="M248 20 325 400M265 95 220 215M575 85 755 140 850 260 855 308M850 260 800 318M850 260 920 220 970 130 1020 90 1050 40 1040 17M1050 40 1130 265 1175 500M750 1005Q745 970 790 950L1320 670Q1330 650 1320 620L1270 490M1230 500Q1240 560 1215 570L1155 590 1120 628 1070 635 1035 612 775 655 795 620 790 575M775 655 680 690M1385 360 1517 370M1445 645 1517 605M470 1080 485 1045M0 340 25 430 0 490 20 650 80 690M0 660 25 655M290 1375 345 1370 350 1410 370 1455M0 1462 850 1405 1517 1380"/></g>
          <path class="dash" d="M1891 309 1948 300M2285 238 2308 222 2335 218 2352 226 2390 218 2434 205"/>

          <!-- streets -->
          <use href="#roads" class="casing"/>
          <use href="#roads" class="surface"/>
          <circle class="island" cx="0" cy="325" r="7"/>
          <path class="median" d="M205 10 238 43M247 55 562 350M567 356 640 420M1567 0 1602 388M1567 300 1569 380M1582 404 1593 690"/>
          <path class="rail" d="M1419 -4 1385 75Q1368 130 1367 230L1366 430 1380 700M1415 -4 1380 80Q1363 150 1363 300L1366 440M1390 225 1392 310M1493 230 1496 302M1370 330 1391 282 1494 271"/>

          <!-- direction arrows -->
          <g class="arrows">
            <use href="#arrow" transform="translate(274 70) rotate(222)"/><use href="#arrow" transform="translate(333 125) rotate(222)"/><use href="#arrow" transform="translate(362 175) rotate(42)"/><use href="#arrow" transform="translate(78 244) rotate(-45)"/><use href="#arrow" transform="translate(48 263) rotate(135)"/><use href="#arrow" transform="translate(633 425) rotate(42)"/><use href="#arrow" transform="translate(787 571) rotate(42)"/><use href="#arrow" transform="translate(795 569) rotate(222)"/><use href="#arrow" transform="translate(1576 38) rotate(-90)"/><use href="#arrow" transform="translate(1565 110) rotate(90)"/><use href="#arrow" transform="translate(1582 158) rotate(-90)"/><use href="#arrow" transform="translate(1599 592) rotate(-90)"/><use href="#arrow" transform="translate(1788 695)"/><use href="#arrow" transform="translate(2042 666) rotate(180)"/><use href="#arrow" transform="translate(2240 648) rotate(180)"/><use href="#arrow" transform="translate(2440 634) rotate(180)"/>
          </g>

          <!-- labels -->
          <g class="street caps">
            <text transform="translate(122 455) rotate(42)">JOHANN-KRANE-WEG</text>
            <text transform="translate(371 438) rotate(44)">JOHANN-KRANE-WEG</text>
            <text transform="translate(13 606) rotate(43)">R-STRASSE</text>
            <text x="1252" y="110">IM MÜNSTERESCH</text>
            <text transform="translate(1316 178) rotate(-87)">IM MÜNSTERESCH</text>
            <text x="1190" y="448">RIGAWEG RIGAWEG</text>
            <text class="on-path"><textPath href="#p-ga">GASSELSTIEGE</textPath></text>
            <text transform="translate(1307 342) rotate(49)">KOBURGER WEG</text>
            <text transform="translate(1363 573) rotate(88)">KOBURGER WEG</text>
            <text transform="translate(1446 392) rotate(-1)">DORPATWEG DORPATWEG</text>
            <text transform="translate(1680 228) rotate(-86)">ARNDTSTRASSE</text>
            <text transform="translate(1741 239) rotate(-87)">KINDERHAUSER STRASSE</text>
            <text transform="translate(1724 40) rotate(79)">AUSER STRASSE</text>
            <text transform="translate(1718 467) rotate(-82)">KINDERHAUSER STRASSE</text>
            <text transform="translate(1666 349) rotate(22)">JAHNSTRASSE</text>
            <text transform="translate(1909 436) rotate(20)">JAHNSTRASSE</text>
            <text transform="translate(2000 471) rotate(21)">JAHNSTRASSE</text>
            <text transform="translate(2431 427) rotate(-50)">JULIUS-HART-STRASSE</text>
            <text transform="translate(2498 430) rotate(-52)">LENAUWEG</text>
            <text class="on-path"><textPath href="#p-ff">FERDINAND-FREILIGRATH-STRASSE</textPath></text>
          </g>
          <g class="street major">
            <text transform="translate(1569 205) rotate(87)">GREVENER STRASSE</text>
            <text transform="translate(1497 697) rotate(-2)">YORK-RING</text>
            <text transform="translate(1650 689) rotate(-2)">FRIESENRING</text>
            <text transform="translate(1815 682) rotate(-2)">FRIESENRING</text>
            <text transform="translate(2155 665) rotate(-3)">FRIESENRING</text>
          </g>
          <g class="street">
            <text x="10" y="87">furt</text>
            <text class="on-path"><textPath href="#p-jk">Johann-Krane-Weg</textPath></text>
            <text transform="translate(618 512) rotate(42)">Leonardo-Campus</text>
            <text transform="translate(836 599) rotate(42)">Steinfurter-Straße</text>
            <text x="902" y="67">Gasselstiege</text>
            <text transform="translate(1026 282) rotate(-89)">Gasselstiege</text>
            <text transform="translate(1037 416) rotate(80)">Gasselstiege</text>
            <text transform="translate(1056 6) rotate(-78)">Gas</text>
            <text transform="translate(1075 95) rotate(2)">Koburger Weg</text>
            <text transform="translate(1165 160) rotate(51)">Koburger Weg</text>
            <text transform="translate(1218 225) rotate(53)">Koburger Weg</text>
            <text transform="translate(746 690) rotate(-80)">mpus</text>
            <text transform="translate(1378 238) rotate(-86)">An der Germania Brauerei</text>
            <text class="on-path"><textPath href="#p-bu">Büchnerstraße</textPath></text>
          </g>
          <g class="place">
            <text x="423" y="376">Eispalast</text>
            <text x="546" y="516">Fachbereich</text><text x="546" y="527">Design</text>
            <text x="680" y="504">Fachbereich</text><text x="680" y="515">Architektur</text>
            <text x="745" y="563">Fachbereich</text><text x="745" y="574">Architektur</text>
            <text x="130" y="679">Chamäleon</text>
            <text x="1072" y="22">WildnisWerkstatt-</text><text x="1072" y="33">GARTEN</text>
            <text x="1247" y="537">Spielplatz Rigaweg</text>
            <text x="1454" y="253">Factory Hotel</text>
            <text x="1845" y="53">Haus 01</text>
            <text x="1869" y="558">Dreifaltigkeitsschule</text>
            <text x="2313" y="253">Haus 26</text>
            <text x="2100" y="566">Polizeipräsidium</text><text x="2100" y="577">Münster</text>
          </g>
          <g class="place big">
            <text x="576" y="637">Kunstakademie</text><text x="576" y="652">Münster</text>
            <text x="2052" y="63">LWL-Klinik</text><text x="2052" y="77">Münster</text>
          </g>
          <g class="shield">
            <rect x="169" y="-1" width="36" height="15" rx="2"/><text x="187" y="7">B 54</text>
            <rect x="334" y="134" width="36" height="15" rx="2"/><text x="352" y="142">B 54</text>
            <rect x="425" y="220" width="36" height="15" rx="2"/><text x="443" y="228">B 54</text>
            <rect x="574" y="361" width="36" height="15" rx="2"/><text x="592" y="369">B 54</text>
            <rect x="577" y="384" width="36" height="15" rx="2"/><text x="595" y="392">B 54</text>
            <rect x="882" y="661" width="36" height="15" rx="2"/><text x="900" y="669">B 54</text>
            <rect x="50" y="248" width="30" height="15" rx="2"/><text x="65" y="256">K 7</text>
            <rect x="1556" y="51" width="42" height="15" rx="2"/><text x="1577" y="59">L 587</text>
            <rect x="1560" y="129" width="42" height="15" rx="2"/><text x="1581" y="137">L 587</text>
            <rect x="1555" y="358" width="42" height="15" rx="2"/><text x="1576" y="366">L 587</text>
            <rect x="1557" y="421" width="42" height="15" rx="2"/><text x="1578" y="429">L 587</text>
            <rect x="1578" y="568" width="42" height="15" rx="2"/><text x="1599" y="576">L 587</text>
            <rect x="1737" y="677" width="30" height="15" rx="2"/><text x="1752" y="685">K 6</text>
            <rect x="1654" y="694" width="30" height="15" rx="2"/><text x="1669" y="702">K 6</text>
            <rect x="1898" y="677" width="30" height="15" rx="2"/><text x="1913" y="685">K 6</text>
            <rect x="2250" y="637" width="30" height="15" rx="2"/><text x="2265" y="645">K 6</text>
            <rect x="2382" y="639" width="30" height="15" rx="2"/><text x="2397" y="647">K 6</text>
          </g>

          <!-- marker -->
          <path class="pin-shadow" filter="url(#soft)" d="M1259 348 1280 304Q1300 284 1308 300 1308 318 1286 336z"/>
          <path class="pin" d="M1259 348C1254 334 1235 312 1235 294A24 24 0 0 1 1283 294C1283 312 1264 334 1259 348z"/>
          <circle cx="1259" cy="294" r="9" fill="#fff" stroke="#2a6ea8"/>
        </svg>

        <div class="zoom">
          <button type="button" aria-label="Zoom in">+</button>
          <button type="button" aria-label="Zoom out">−</button>
        </div>
        <div class="scale">
          <div class="scale-m">100 m</div>
          <div class="scale-ft">300 ft</div>
        </div>
        <div class="attribution"><a href="#leaflet">Leaflet</a> | © <a href="#mapbox">Mapbox</a> © <a href="#osm">OpenStreetMap</a> <a class="improve" href="#improve">Improve this map</a></div>
      </div>
    </section>
  </form>
</main>
</body>
</html>
```

FILE: styles.css
```css
* { box-sizing: border-box; }

body {
  margin: 0;
  background: #fefefe;
  color: #333;
  font: 28px/40px "Liberation Sans", Arial, sans-serif;
}

.page { padding: 24px 78px 46px 124px; }

/* wizard header */
.wizard-head {
  display: grid;
  grid-template-columns: 100px 1fr 100px;
  align-items: start;
  padding-bottom: 140px;
}
.wizard-title {
  margin: 30px 0 0;
  font-size: 47px;
  line-height: 50px;
  font-weight: 700;
  text-align: center;
}
.round-btn {
  display: flex;
  align-items: center;
  justify-content: center;
  width: 100px;
  height: 100px;
  padding: 0;
  border: 2px solid #ccc;
  border-radius: 50%;
  background: #fff;
  color: #333;
}
.round-btn svg { fill: currentColor; }
.round-btn:disabled { opacity: .65; }

/* sections */
.block { border-top: 2px solid #eee; }
.block + .block { margin-top: 40px; }
.block-title {
  margin: 64px 0 24px;
  color: #777;
  font-size: 47px;
  line-height: 50px;
  font-weight: 400;
  text-align: center;
}
.alert {
  display: flex;
  gap: 7px;
  margin: 0 0 40px;
  padding: 30px;
  border: 2px solid #bce8f1;
  border-radius: 8px;
  background: #d9edf7;
  color: #31708f;
}
.info { flex: none; margin-top: 4px; fill: currentColor; }
.info-i { fill: #d9edf7; }

/* form fields */
.field { margin: 0; padding: 0; border: 0; min-width: 0; }
.field + .field { margin-top: 30px; }
.field-label {
  display: block;
  margin: 0 0 10px;
  padding: 0;
  font-weight: 700;
}
.has-error { color: #a94442; }
.control { position: relative; }
.text-input {
  display: block;
  width: 100%;
  height: 68px;
  padding: 0 24px;
  border: 2px solid #ccc;
  border-radius: 8px;
  background: #fff;
  box-shadow: inset 0 2px 2px rgba(0, 0, 0, .075);
  color: #555;
  font: inherit;
}
.text-input::placeholder { color: #999; opacity: 1; }
.has-error .text-input { border-color: #a94442; }
.feedback {
  position: absolute;
  top: 22px;
  right: 32px;
  fill: #a94442;
}
.radios {
  display: flex;
  flex-direction: column;
  gap: 10px;
  padding-top: 20px;
}
.radio { display: flex; gap: 16px; align-self: flex-start; }
.radio input {
  appearance: none;
  width: 34px;
  height: 34px;
  margin: 0;
  border: 2px solid #ccc;
  border-radius: 50%;
  background: #fff;
}

/* map */
.map {
  position: relative;
  height: 700px;
  overflow: hidden;
  background: #e9e0da;
  font-size: 22px;
  line-height: 32px;
}
.tiles { display: block; width: 100%; height: 100%; }
.tiles path { vector-effect: non-scaling-stroke; }
.residential, .hole { fill: #e9e0da; }
.meadow { fill: #e8e2d7; }
.farm { fill: #e7dfca; }
.green { fill: #cddba2; }
.pitch { fill: #c8e7a7; }
.pitch-line { fill: none; stroke: #c8e7a7; stroke-width: 6; }
.scrub { fill: #e0decf; }
.heath { fill: #e4dccf; }
.school { fill: #eee1bc; }
.sand { fill: #f5f0dc; }
.hospital { fill: #eee1da; }
.yard { fill: #ebe6e0; }
.water { fill: #76b4e2; }
.buildings { fill: #d9cabe; stroke: #cfbfb1; stroke-width: 1; }
.plain { stroke: none; }
.stream { fill: none; stroke: #76b4e2; stroke-width: 1; }
.hedge { fill: none; stroke: #3f6b1c; stroke-width: 1; }
.track { fill: none; stroke: #fff; stroke-width: 2; stroke-linejoin: round; }
.faint { opacity: .6; }
.dots { fill: none; stroke: #fff; stroke-width: 1; stroke-dasharray: 2 2; opacity: .9; }
.dots circle { vector-effect: non-scaling-stroke; }
.dash { fill: none; stroke: #fff; stroke-width: 5; stroke-dasharray: 12 4; }
.casing, .surface { fill: none; stroke-linecap: round; stroke-linejoin: round; }
.casing { --edge: 3px; stroke: #cbc3b9; }
.surface { --edge: 0px; stroke: #fff; }
.w-xl { stroke-width: calc(32px + var(--edge)); }
.w-h { stroke-width: calc(17px + var(--edge)); }
.w-l { stroke-width: calc(10px + var(--edge)); }
.w-m { stroke-width: calc(7px + var(--edge)); }
.w-s { stroke-width: calc(3px + var(--edge)); }
.island { fill: #e4dccf; stroke: #c6bdb0; }
.median { fill: none; stroke: #c3b9ac; stroke-width: 3; }
.rail { fill: none; stroke: #a9a9a9; stroke-width: 1; }
.arrows { fill: #8fa5ab; stroke: #8fa5ab; stroke-width: 1; }

.tiles text {
  font-family: "Open Sans", "Noto Sans", sans-serif;
  font-size: 11px;
  font-weight: 600;
  text-anchor: middle;
  dominant-baseline: central;
  paint-order: stroke;
  stroke: rgba(255, 255, 255, .8);
  stroke-width: 2px;
  stroke-linejoin: round;
  fill: #5f5f5f;
}
.tiles .on-path { text-anchor: start; }
.tiles .caps text { fill: #444; }
.tiles .major text { fill: #444; font-size: 12px; font-weight: 700; }
.tiles .place text { fill: #5d5d64; stroke: rgba(255, 255, 255, .4); }
.tiles .big text { font-size: 14px; }
.shield rect { fill: #fff; stroke: #8c8c8c; }
.tiles .shield text { fill: #444; stroke: none; }
.pin { fill: url(#pin); stroke: #2a6ea8; stroke-width: 2; }
.pin-shadow { fill: url(#shade); }

.zoom {
  position: absolute;
  top: 20px;
  left: 20px;
  display: flex;
  flex-direction: column;
  border-radius: 8px;
  box-shadow: 0 2px 10px rgba(0, 0, 0, .65);
  background: #fff;
  overflow: hidden;
}
.zoom button {
  width: 52px;
  height: 52px;
  padding: 4px 0 0;
  border: 0;
  background: #fff;
  color: #000;
  font: 700 36px/48px "Liberation Sans", Arial, sans-serif;
}
.zoom button:first-child { border-bottom: 2px solid #ccc; }

.scale {
  position: absolute;
  left: 20px;
  bottom: 10px;
  color: #333;
}
.scale-m, .scale-ft {
  padding: 0 10px;
  border: solid #777;
  background: rgba(255, 255, 255, .5);
}
.scale-m { width: 136px; height: 34px; border-width: 0 4px 4px; }
.scale-ft { width: 124px; height: 30px; border-width: 0 4px; }

.attribution {
  position: absolute;
  right: 0;
  bottom: 0;
  padding: 0 10px;
  background: rgba(255, 255, 255, .7);
  color: #333;
}
.attribution a { color: #0078a8; text-decoration: none; }
.attribution .improve { font-weight: 700; }
```
